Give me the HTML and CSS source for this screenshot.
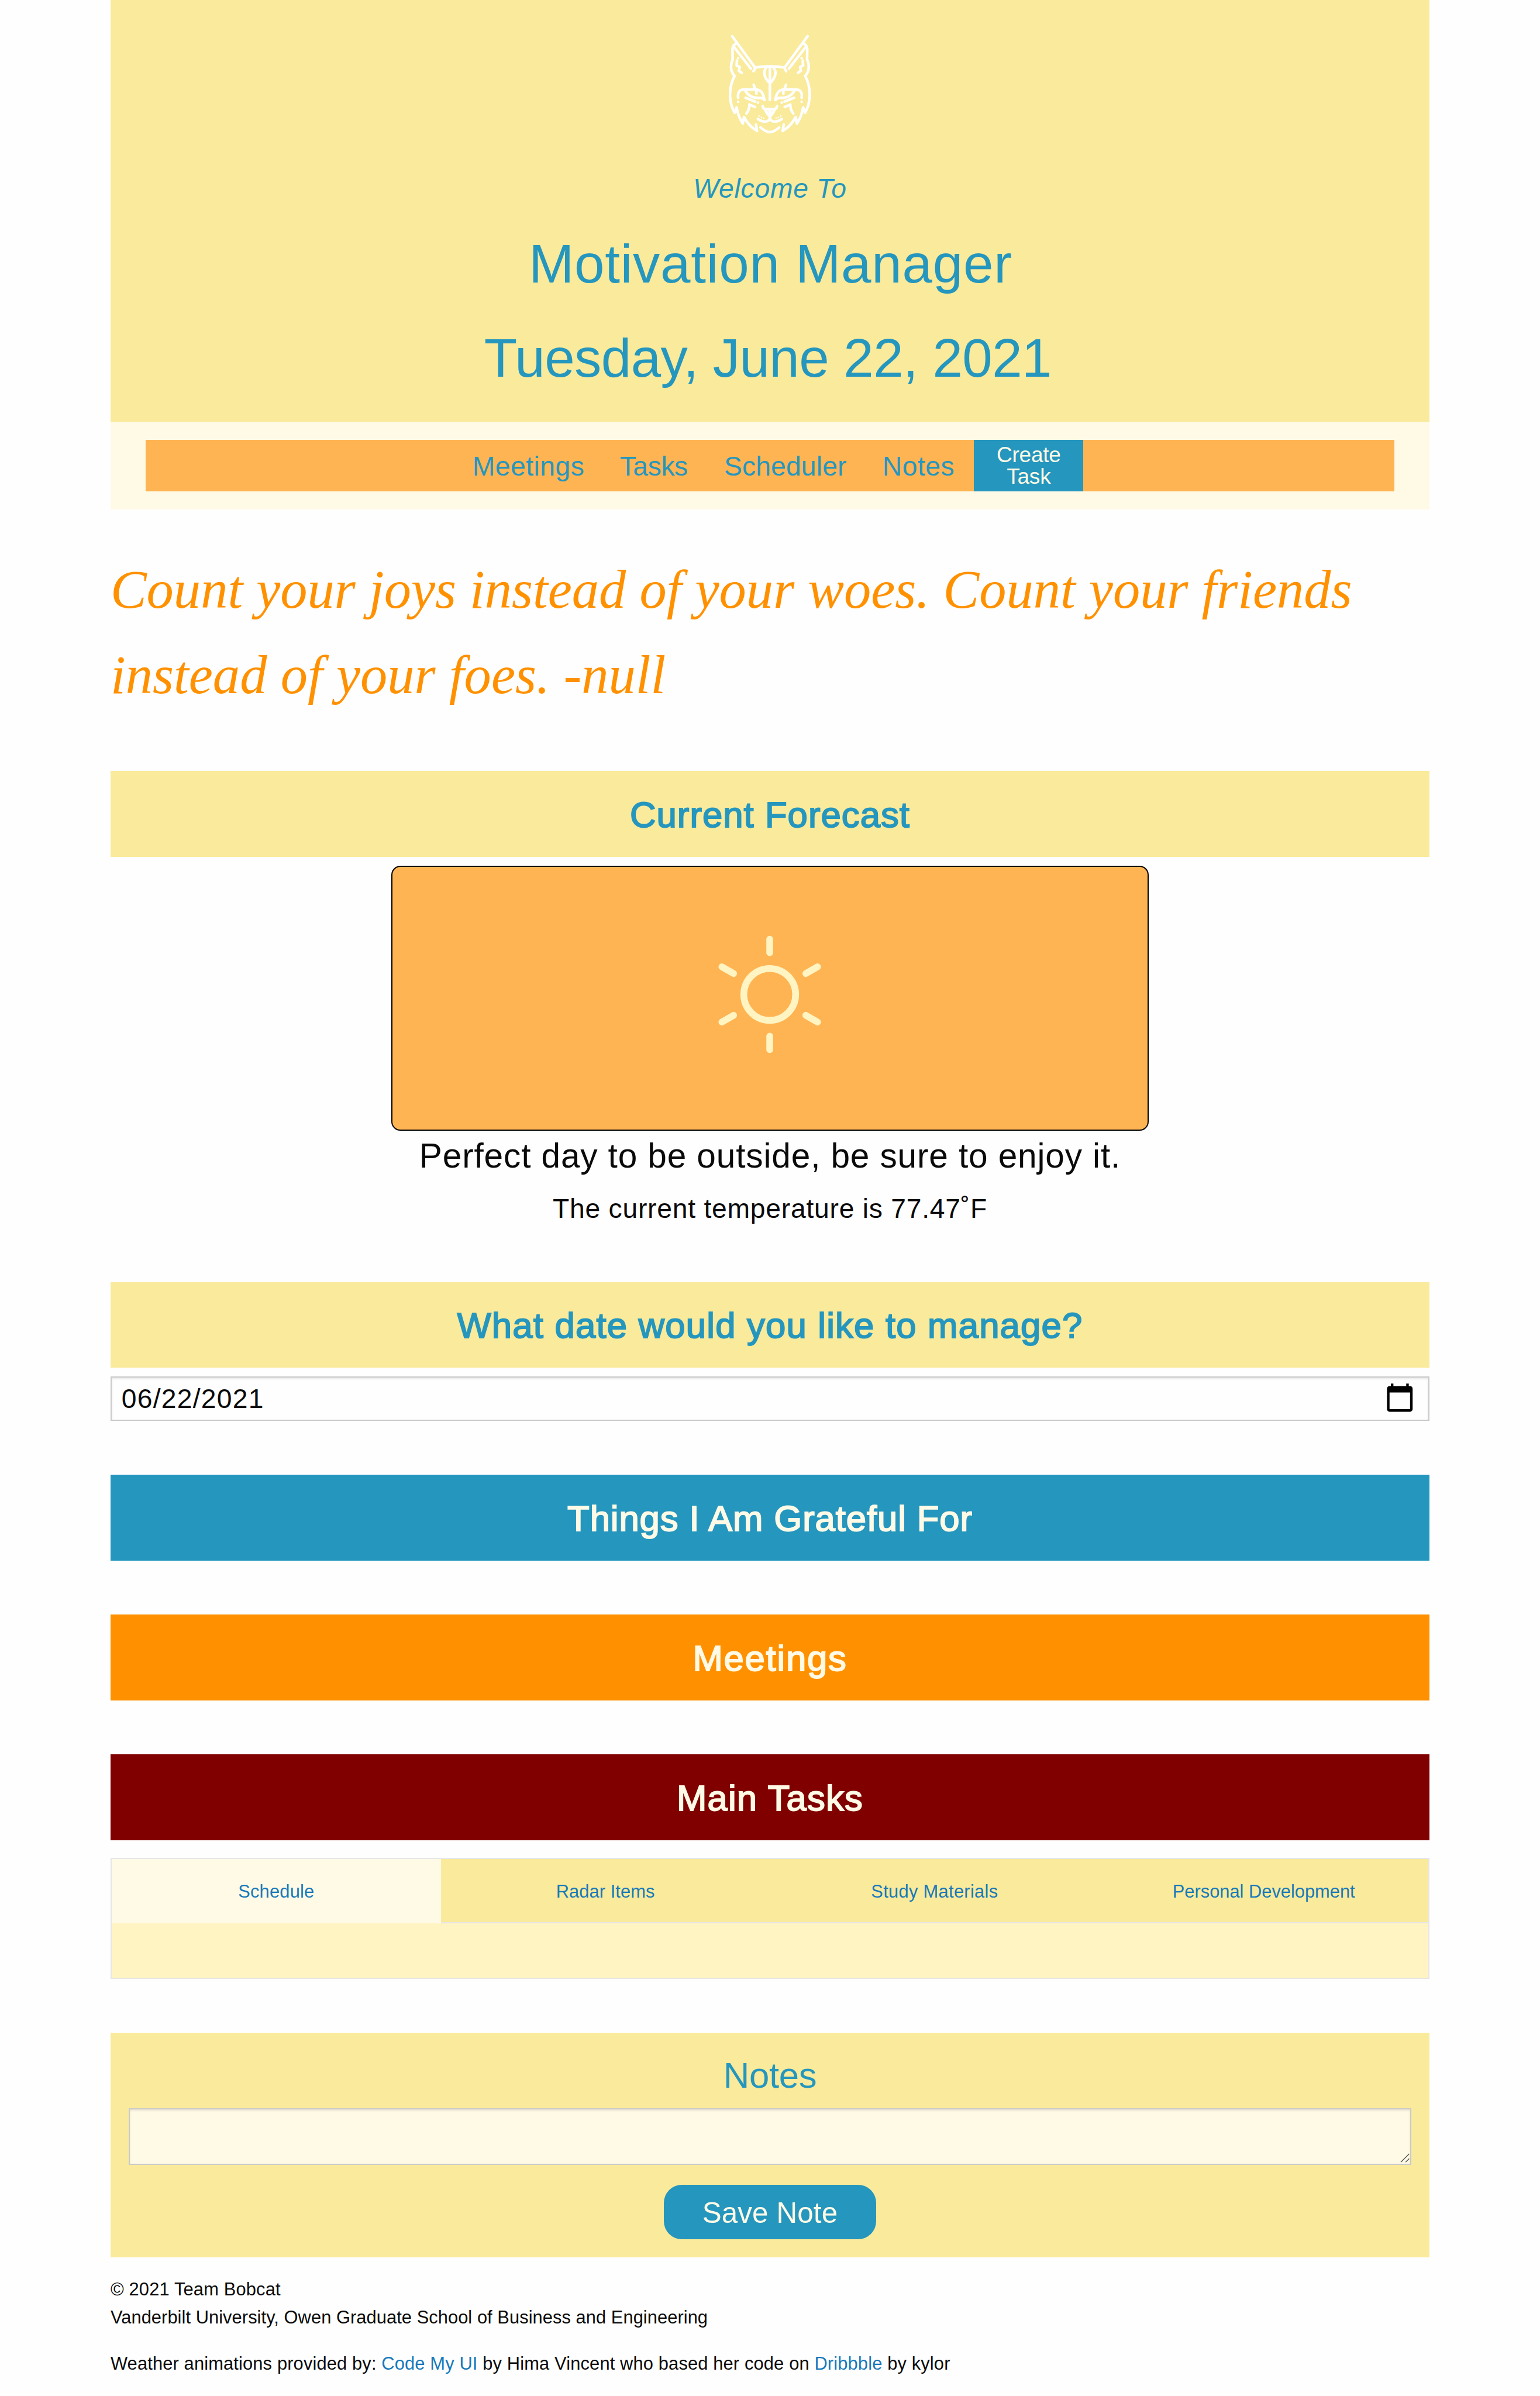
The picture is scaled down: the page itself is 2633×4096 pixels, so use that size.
FILE: index.html
```html
<!DOCTYPE html>
<html lang="en">
<head>
<meta charset="utf-8">
<title>Motivation Manager</title>
<link rel="stylesheet" href="styles.css">
</head>
<body>
<div class="page">
  <header class="hero">
    <svg class="logo" viewBox="0 0 780 720" aria-hidden="true">
      <defs>
        <g id="half-face">
          <path d="M180 102 L302 269 Q301 282 294 288 M302 269 Q340 262 382 263"/>
          <path d="M190 160 L280 275"/>
          <path d="M200 144 Q186 146 182 170 L183 225 Q170 255 176 283 Q181 302 193 314 Q168 360 169 418 Q171 472 194 510 L204 481 Q212 530 237 567 L243 532 Q270 583 313 606 L307 573"/>
          <path d="M206 232 L204 258 L220 266 L216 287 L231 297"/>
          <path d="M362 270 Q347 286 353 310 Q360 334 381 352"/>
          <path d="M212 430 Q206 386 245 386 H310 Q345 390 352 442 L336 431 Q274 436 250 392 M309 388 V408 M295 361 L304 385"/>
          <path d="M252 430 L303 450 M302 479 L272 466 Q273 494 256 514"/>
          <path d="M343 474 Q344 490 360 490 H382 M356 492 Q361 510 381 530"/>
          <path d="M317 543 Q345 562 365 555 Q381 550 381 534"/>
          <path d="M331 588 Q358 612 382 613"/>
          <g class="logo-dots"><circle cx="212" cy="219" r="7"/><circle cx="212" cy="451" r="7"/><circle cx="318" cy="456" r="7"/><circle cx="323" cy="527" r="4"/><circle cx="336" cy="534" r="4"/><circle cx="348" cy="538" r="4"/></g>
        </g>
      </defs>
      <g class="logo-lines">
        <use href="#half-face"/>
        <use href="#half-face" transform="translate(762 0) scale(-1 1)"/>
        <path d="M381 268 V442 M381 495 V548"/>
        <path class="logo-fill" d="M368 338 H394 L381 360 Z"/>
        <path class="logo-soft" d="M362 498 H400 L381 526 Z"/>
      </g>
    </svg>
    <p class="welcome">Welcome To</p>
    <h1 class="title">Motivation Manager</h1>
    <h2 class="today">Tuesday, June 22, 2021</h2>
  </header>

  <div class="nav-wrap">
    <nav class="nav">
      <a class="nav-item nav-meetings">Meetings</a>
      <a class="nav-item nav-tasks">Tasks</a>
      <a class="nav-item nav-scheduler">Scheduler</a>
      <a class="nav-item nav-notes">Notes</a>
      <a class="create">Create<br>Task</a>
    </nav>
  </div>

  <p class="quote">Count your joys instead of your woes. Count your friends<br><span class="quote-end">instead of your foes. -null</span></p>

  <section class="forecast">
    <h3 class="band band-yellow band-forecast">Current Forecast</h3>
    <div class="weather">
      <svg class="sun" viewBox="-110 -110 220 220" aria-hidden="true">
        <circle r="46"/>
        <g class="rays">
          <rect x="-6" y="-104" width="12" height="36" rx="6"/>
          <rect x="-6" y="-104" width="12" height="36" rx="6" transform="rotate(60)"/>
          <rect x="-6" y="-104" width="12" height="36" rx="6" transform="rotate(120)"/>
          <rect x="-6" y="-104" width="12" height="36" rx="6" transform="rotate(180)"/>
          <rect x="-6" y="-104" width="12" height="36" rx="6" transform="rotate(240)"/>
          <rect x="-6" y="-104" width="12" height="36" rx="6" transform="rotate(300)"/>
        </g>
      </svg>
    </div>
    <p class="advice">Perfect day to be outside, be sure to enjoy it.</p>
    <p class="temperature">The current temperature is 77.47˚F</p>
  </section>

  <section class="date">
    <h3 class="band band-yellow band-date">What date would you like to manage?</h3>
    <div class="date-field">
      <span>06/22/2021</span>
      <svg class="calendar" viewBox="0 0 24 24" aria-hidden="true"><path d="M20 3h-1V1h-2v2H7V1H5v2H4c-1.1 0-2 .9-2 2v16c0 1.1.9 2 2 2h16c1.1 0 2-.9 2-2V5c0-1.1-.9-2-2-2zm0 18H4V8h16v13z"/></svg>
    </div>
  </section>

  <h3 class="band band-blue">Things I Am Grateful For</h3>
  <h3 class="band band-orange">Meetings</h3>
  <h3 class="band band-maroon">Main Tasks</h3>

  <div class="tabs">
    <div class="tab-bar">
      <a class="tab tab-active">Schedule</a>
      <a class="tab tab-radar">Radar Items</a>
      <a class="tab tab-study">Study Materials</a>
      <a class="tab tab-personal">Personal Development</a>
    </div>
    <div class="tab-panel"></div>
  </div>

  <section class="notes">
    <h3 class="notes-title">Notes</h3>
    <div class="note-box">
      <svg class="grip" viewBox="0 0 16 16" aria-hidden="true"><path d="M1 15 L15 1 M9 15 L15 9"/></svg>
    </div>
    <button class="save">Save Note</button>
  </section>

  <footer class="footer">
    <p class="team">© 2021 Team Bobcat</p>
    <p class="school">Vanderbilt University, Owen Graduate School of Business and Engineering</p>
    <p class="credits">Weather animations provided by: <a>Code My UI</a> by Hima Vincent who based her code on <a>Dribbble</a> by kylor</p>
  </footer>
</div>
</body>
</html>
```
FILE: styles.css
```css
:root {
  --yellow: #faea9b;
  --cream: #fffae6;
  --pale: #fff4c2;
  --peach: #ffb453;
  --orange: #ff9100;
  --blue: #2596be;
  --maroon: #800000;
  --link: #1779ba;
  font-size: 9.6376px;
}

* { box-sizing: border-box; margin: 0; padding: 0; }

body {
  background: #fefefe;
  color: #0a0a0a;
  font-family: "Liberation Sans", Arial, sans-serif;
}

h1, h2, h3 { font-weight: 400; }

.page { width: 234rem; margin: 0 auto; }

/* Header */
.hero {
  height: 74.8rem;
  padding-top: 3rem;
  background: var(--yellow);
  color: var(--blue);
  text-align: center;
}
.logo { display: block; width: 26rem; height: 24rem; margin: 0 auto; transform: translateX(.3rem); }
.logo-lines { fill: none; stroke: #fff; stroke-width: 14; stroke-linecap: round; stroke-linejoin: round; }
.logo-dots, .logo-fill { fill: #fff; stroke: none; }
.logo-soft { fill: #fff; stroke: none; opacity: .6; }
.welcome { font-size: 4.8rem; line-height: 13.04rem; font-style: italic; letter-spacing: .017em; }
.title { font-size: 9.6rem; line-height: 13.66rem; letter-spacing: .0085em; padding-left: .2rem; }
.today { font-size: 9.6rem; line-height: 19.52rem; letter-spacing: -.006em; padding-right: .75rem; }

/* Navigation */
.nav-wrap { height: 15.6rem; padding: 3.2rem 6.2rem; background: var(--cream); }
.nav {
  display: flex;
  justify-content: center;
  height: 9.2rem;
  padding-right: .25rem;
  background: var(--peach);
}
.nav-item { padding-top: .1rem; font-size: 4.8rem; line-height: 9.2rem; text-align: center; color: var(--blue); }
.nav-meetings { width: 26rem; letter-spacing: .0105em; }
.nav-tasks { width: 18.45rem; letter-spacing: -.0088em; }
.nav-scheduler { width: 28.25rem; letter-spacing: .0035em; }
.nav-notes { width: 19rem; letter-spacing: .011em; }
.create {
  width: 19.4rem;
  height: 9.2rem;
  margin-left: .35rem;
  padding-top: .9rem;
  background: var(--blue);
  color: var(--cream);
  font-size: 3.84rem;
  line-height: 3.8rem;
  letter-spacing: -.006em;
  text-align: center;
}

/* Quote */
.quote {
  padding: 6.6rem 0 9.4rem;
  color: var(--orange);
  font: italic 9.6rem/15.2rem "Liberation Serif", "Times New Roman", serif;
  white-space: nowrap;
}
.quote-end { letter-spacing: .0005em; }

/* Section bands */
.band {
  height: 15.2rem;
  padding-top: .15rem;
  font-size: 6.4rem;
  line-height: 15.2rem;
  text-align: center;
  -webkit-text-stroke: .2rem currentColor;
}
.band-yellow { background: var(--yellow); color: var(--blue); }
.band-forecast { letter-spacing: .0165em; }
.band-date { letter-spacing: .0193em; }
.band-blue, .band-orange, .band-maroon { margin-bottom: 9.6rem; color: var(--cream); }
.band-blue { background: var(--blue); letter-spacing: .0142em; }
.band-orange { background: var(--orange); letter-spacing: .028em; }
.band-maroon { background: var(--maroon); letter-spacing: .019em; margin-bottom: 3.2rem; }

/* Forecast */
.forecast { height: 90.6rem; text-align: center; }
.weather {
  display: flex;
  justify-content: center;
  width: 134.4rem;
  height: 47rem;
  margin: 1.6rem auto 0;
  padding-top: 11.6rem;
  background: var(--peach);
  border: 2px solid #000;
  border-radius: 1.6rem;
}
.sun { width: 22rem; height: 22rem; }
.sun circle { fill: none; stroke: var(--pale); stroke-width: 12; }
.rays { fill: var(--pale); }
.advice { font-size: 6.08rem; line-height: 9.02rem; letter-spacing: .0146em; }
.temperature { font-size: 4.8rem; line-height: 9.74rem; letter-spacing: .0164em; }

/* Date */
.date { height: 34.2rem; }
.date-field {
  display: flex;
  justify-content: space-between;
  height: 7.8rem;
  margin-top: 1.6rem;
  padding: 0 2.35rem 0 1.75rem;
  border: 2px solid #cacaca;
  box-shadow: inset 0 .2rem .4rem rgba(10, 10, 10, .1);
  font-size: 4.8rem;
  line-height: 7.6rem;
  letter-spacing: .027em;
}
.calendar { width: 5.46rem; height: 5.46rem; margin-top: .75rem; }

/* Tabs */
.tabs { height: 21.4rem; border: 2px solid #e6e6e6; }
.tab-bar { display: grid; grid-template-columns: repeat(4, 1fr); height: 11.4rem; background: var(--yellow); border-bottom: 2px solid #e6e6e6; }
.tab { padding-top: .2rem; color: var(--link); font-size: 3.2rem; line-height: 11.2rem; text-align: center; letter-spacing: .007em; }
.tab-active { background: var(--cream); }
.tab-radar { letter-spacing: .0022em; }
.tab-study { letter-spacing: .01em; }
.tab-personal { letter-spacing: 0; }
.tab-panel { height: 9.6rem; background: var(--pale); }

/* Notes */
.notes {
  height: 39.8rem;
  margin-top: 9.6rem;
  padding: 3.2rem;
  background: var(--yellow);
  text-align: center;
}
.notes-title { height: 10.2rem; color: var(--blue); font-size: 6.4rem; line-height: 8.8rem; letter-spacing: -.0054em; }
.note-box {
  display: flex;
  justify-content: flex-end;
  align-items: flex-end;
  height: 10rem;
  padding: .1rem;
  background: var(--cream);
  border: 2px solid #cacaca;
  box-shadow: inset 0 .2rem .4rem rgba(10, 10, 10, .1);
}
.grip { width: 1.7rem; height: 1.7rem; }
.grip path { fill: none; stroke: #555; stroke-width: 1.4; }
.save {
  display: block;
  width: 37.6rem;
  height: 9.6rem;
  margin: 3.6rem auto 0;
  padding-top: .3rem;
  border: 0;
  border-radius: 3.2rem;
  background: var(--blue);
  color: var(--cream);
  font: 5.12rem/9.3rem "Liberation Sans", Arial, sans-serif;
  letter-spacing: .0028em;
}

/* Footer */
.footer { padding-top: 3.2rem; font-size: 3.2rem; line-height: 5rem; white-space: nowrap; }
.footer a { color: var(--link); }
.team { letter-spacing: .0055em; }
.school { letter-spacing: .002em; }
.credits { margin-top: 3.2rem; letter-spacing: .0048em; }
```
